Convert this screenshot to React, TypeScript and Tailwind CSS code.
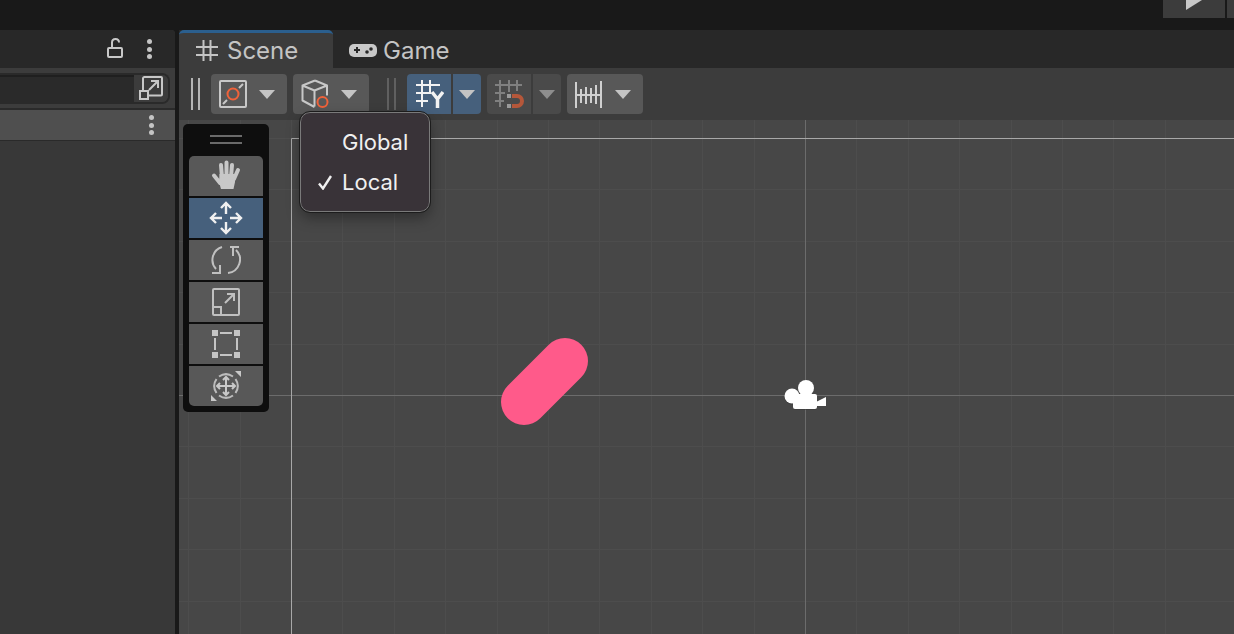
import React from 'react';

const Caret: React.FC<{ color?: string }> = ({ color = '#c4c4c4' }) => (
  <svg width="16" height="9" viewBox="0 0 16 9" className="shrink-0">
    <path d="M0 0h16L8 9z" fill={color} />
  </svg>
);

const Grip: React.FC<{ dim?: boolean }> = ({ dim }) => (
  <div className={`flex w-[9px] h-8 mt-1 justify-between shrink-0 ${dim ? 'opacity-30' : 'opacity-100'}`}>
    <div className="w-[2px] h-full bg-[#b4b4b4]" />
    <div className="w-[2px] h-full bg-[#b4b4b4]" />
  </div>
);

const ShadingIcon = () => (
  <svg width="28" height="28" viewBox="0 0 28 28" fill="none" className="shrink-0">
    <rect x="1" y="1" width="26" height="26" rx="1" stroke="#c8c8c8" strokeWidth="2" />
    <path d="M4 24l4-4M20 8l4-4" stroke="#c8c8c8" strokeWidth="2" />
    <circle cx="14" cy="14" r="5.500" stroke="#f0623a" strokeWidth="2" />
  </svg>
);

const CubeIcon = () => (
  <svg width="30" height="30" viewBox="0 0 30 30" fill="none" className="shrink-0">
    <path d="M15 1.500L27 6.500v10M15 1.500L2.500 6.500v15l12 6.500M2.500 6.500l12 5 12.500-5M14.500 11.500v16" stroke="#c8c8c8" strokeWidth="2" strokeLinejoin="round" />
    <circle cx="22.500" cy="23" r="5" fill="#585858" stroke="#f0623a" strokeWidth="2" />
  </svg>
);

const GridYIcon = () => (
  <svg width="30" height="30" viewBox="0 0 30 30" fill="none" className="shrink-0">
    <path d="M8 1v27M16 1v12M2 6h24M2 14h15M2 22h12" stroke="#f2f2f2" strokeWidth="2" />
    <path d="M18 13l5.500 7 5.500-7M23.500 20v9" stroke="#f2f2f2" strokeWidth="3.500" />
  </svg>
);

const GridSnapIcon = () => (
  <svg width="30" height="30" viewBox="0 0 30 30" fill="none" className="shrink-0">
    <path d="M6 1v27M15 1v12M23 1v11M1 6h27M1 14h10M1 22h9" stroke="#808080" strokeWidth="2" />
    <rect x="13" y="15" width="4" height="4" fill="#9a9a9a" />
    <rect x="13" y="25" width="4" height="4" fill="#9a9a9a" />
    <path d="M18 17h5a5 5 0 0 1 0 10h-5" stroke="#b5573a" strokeWidth="4" />
  </svg>
);

const IncrementIcon = () => (
  <svg width="28" height="28" viewBox="0 0 28 28" fill="none" className="shrink-0">
    <path d="M1 2v26M6 9v14M11 7v17M16 8v15M21 5v19M26 1v27M1 15h25" stroke="#d0d0d0" strokeWidth="2" />
  </svg>
);

const LockIcon = () => (
  <svg width="16" height="20" viewBox="0 0 16 20" fill="none" className="shrink-0 mb-[2px]">
    <rect x="1" y="10" width="14" height="9" rx="1" stroke="#c8c8c8" strokeWidth="2" />
    <path d="M5 10V4.500C5 2.500 6.500 1 8.500 1S12 2.500 12 4.500" stroke="#c8c8c8" strokeWidth="2" />
  </svg>
);

const Dots = () => (
  <div className="flex flex-col shrink-0 gap-[2.500px]">
    <div className="w-[5px] h-[5px] rounded-full bg-[#c4c4c4]" />
    <div className="w-[5px] h-[5px] rounded-full bg-[#c4c4c4]" />
    <div className="w-[5px] h-[5px] rounded-full bg-[#c4c4c4]" />
  </div>
);

const PickerIcon = () => (
  <svg width="24" height="24" viewBox="0 0 24 24" fill="none">
    <path d="M4 14V2.500A1.500 1.500 0 0 1 5.500 1H22a1 1 0 0 1 1 1v16.500a1 1 0 0 1-1 1H10" stroke="#c8c8c8" strokeWidth="2" />
    <rect x="1" y="15" width="8" height="8" fill="#3c3c3c" stroke="#c8c8c8" strokeWidth="2" />
    <path d="M10 14l9-9M12 5h7v7" stroke="#c8c8c8" strokeWidth="2" />
  </svg>
);

const HashIcon = () => (
  <svg width="22" height="21" viewBox="0 0 22 21" fill="none" className="shrink-0">
    <path d="M7.500 0v21M14.500 0v21M0 7h22M0 15h22" stroke="#c4c4c4" strokeWidth="2" />
  </svg>
);

const GamepadIcon = () => (
  <svg width="28" height="13" viewBox="0 0 28 13" className="shrink-0">
    <rect x="0" y="0" width="28" height="13" rx="5" fill="#c8c8c8" />
    <path d="M5 5h2V3h2v2h2v2H9v2H7V7H5z" fill="#282828" />
    <circle cx="18" cy="8" r="1.800" fill="#282828" />
    <circle cx="22" cy="5" r="1.800" fill="#282828" />
  </svg>
);

const HandIcon = () => (
  <svg width="30" height="30" viewBox="0 0 30 30" fill="#c8c8c8" className="mb-[2px]">
    <path d="M8.500 14H24v8l-1.500 7H10l-2-7z" />
    <path d="M15.500 2.500V16M10 5l1 12M21 5l-1 12M27 10l-4 9M3 15.500L9 23" fill="none" stroke="#c8c8c8" strokeWidth="4" strokeLinecap="round" />
  </svg>
);

const MoveIcon = () => (
  <svg width="34" height="34" viewBox="0 0 34 34" fill="none" stroke="#f0f0f0" strokeWidth="2.400">
    <path d="M17 2v11M17 21v11M2 17h11M21 17h11M12 7l5-5 5 5M12 27l5 5 5-5M7 12l-5 5 5 5M27 12l5 5-5 5" />
  </svg>
);

const RotateIcon = () => (
  <svg width="30" height="30" viewBox="0 0 30 30" fill="none" stroke="#c0c0c0" strokeWidth="2">
    <path d="M11 2A13.500 13.500 0 0 0 5 24M1 28h8v-8M17 28A13.500 13.500 0 0 0 25 5M19 2h9M22 2v9" />
  </svg>
);

const ScaleIcon = () => (
  <svg width="28" height="28" viewBox="0 0 28 28" fill="none" stroke="#c0c0c0" strokeWidth="2">
    <rect x="1" y="1" width="26" height="26" rx="1" />
    <path d="M1 19h8v8M13 15L22 6M15 6h7v7" />
  </svg>
);

const RectIcon = () => (
  <svg width="28" height="28" viewBox="0 0 28 28" fill="#c4c4c4">
    <rect x="0" y="0" width="6" height="6" />
    <rect x="22" y="0" width="6" height="6" />
    <rect x="0" y="22" width="6" height="6" />
    <rect x="22" y="22" width="6" height="6" />
    <path d="M8 2h12v2H8zM8 24h12v2H8zM2 8h2v12H2zM24 8h2v12h-2z" />
  </svg>
);

const TransformIcon = () => (
  <svg width="32" height="32" viewBox="0 0 32 32" fill="none">
    <path d="M9 6.500A12.500 12.500 0 0 1 23 6.500M25.500 9a12.500 12.500 0 0 1 0 14M23 25.500a12.500 12.500 0 0 1-14 0M6.500 23a12.500 12.500 0 0 1 0-14" stroke="#bcbcbc" strokeWidth="2" />
    <path d="M16 7v18M7 16h18M13 10l3-3 3 3M13 22l3 3 3-3M10 13l-3 3 3 3M22 13l3 3-3 3" stroke="#c8c8c8" strokeWidth="2" />
    <path d="M31 1v6l-6-6zM1 31v-6l6 6z" fill="#c8c8c8" />
  </svg>
);

const tools = [
  { key: 'hand', icon: <HandIcon />, active: false, extra: 'rounded-t-[5px]' },
  { key: 'move', icon: <MoveIcon />, active: true, extra: '' },
  { key: 'rotate', icon: <RotateIcon />, active: false, extra: '' },
  { key: 'scale', icon: <ScaleIcon />, active: false, extra: '' },
  { key: 'rect', icon: <RectIcon />, active: false, extra: '' },
  { key: 'transform', icon: <TransformIcon />, active: false, extra: 'rounded-b-[5px]' },
];

const gridXs = Array.from({ length: 21 }, (_, i) => Math.round(805 - 51.4 * 13 + 51.4 * i) + 0.5);
const gridYs = Array.from({ length: 11 }, (_, i) => Math.round(395 - 51.4 * 5 + 51.4 * i) + 0.5);

// scene canvas, drawn in page coordinates
const SceneCanvas = () => (
  <svg className="absolute inset-0" width="1055" height="514" viewBox="179 120 1055 514" fill="none">
    {gridXs.map(x => (
      <path key={x} d={`M${x} 120V634`} stroke="#4d4d4d" strokeWidth="1" />
    ))}
    {gridYs.map(y => (
      <path key={y} d={`M179 ${y}H1234`} stroke="#4d4d4d" strokeWidth="1" />
    ))}
    <path d="M179 395.500H1234M805.500 120V634" stroke="#6c6c6c" strokeWidth="1" />
    <path d="M291.500 634V138.500H1234" stroke="#a8a8a8" strokeWidth="1" />
    <path d="M524 402L565 361" stroke="#ff5a8a" strokeWidth="46" strokeLinecap="round" />
    <g fill="#3a3a3a" opacity="0.6" transform="translate(0 1)">
      <circle cx="792" cy="396" r="7.500" />
      <rect x="793" y="396" width="24" height="13" rx="2" />
    </g>
    <g fill="#ffffff">
      <circle cx="792" cy="396" r="7.500" />
      <circle cx="806" cy="388" r="8" />
      <rect x="793" y="394" width="24" height="15" rx="2" />
      <path d="M816 402l10-5v9h-10z" />
    </g>
  </svg>
);

export default function App() {
  return (
    <div className="w-[1234px] h-[634px] flex flex-col overflow-hidden bg-[#191919] font-['Inter',sans-serif]">
      {/* Top bar */}
      <div className="h-[30px] shrink-0 flex justify-end items-start">
        <div className="w-[62px] h-[18px] bg-[#3c3c3c] pl-[23px] flex items-start">
          <svg width="16" height="10" viewBox="0 0 16 10">
            <path d="M0 0h16L0 10z" fill="#c8c8c8" />
          </svg>
        </div>
        <div className="w-[7px] h-[18px] ml-[2px] bg-[#3c3c3c]" />
      </div>

      <div className="flex-1 flex gap-[4px] min-h-0">
        {/* Left panel */}
        <div className="w-[175px] shrink-0 flex flex-col bg-[#383838] rounded-tr-[4px] overflow-hidden">
          <div className="h-[38px] shrink-0 bg-[#282828] flex items-center justify-end pr-[23px] gap-[24px]">
            <LockIcon />
            <Dots />
          </div>
          <div className="h-[42px] shrink-0 bg-[#3c3c3c] border-b-2 border-[#2a2a2a] pr-[5px] flex items-center">
            <div className="flex-1 h-[31px] flex rounded-r-[8px] border-2 border-l-0 border-[#2a2a2a] overflow-hidden">
              <div className="flex-1 bg-[#2a2a2a] border-t-2 border-[#1f1f1f]" />
              <div className="w-[34px] bg-[#3c3c3c] flex items-center justify-center">
                <PickerIcon />
              </div>
            </div>
          </div>
          <div className="h-[31px] shrink-0 bg-[#4f4f4f] border-b border-[#2a2a2a] flex items-center justify-end pr-[21px]">
            <Dots />
          </div>
        </div>

        {/* Scene window */}
        <div className="flex-1 min-w-0 flex flex-col bg-[#282828]">
          <div className="h-[38px] shrink-0 flex items-stretch">
            <div className="w-[154px] bg-[#3c3c3c] rounded-t-[5px] border-t-[3px] border-[#2b5f8e] flex items-center pl-[17px] gap-[9px]">
              <HashIcon />
              <span className="text-[24px] leading-none text-[#c4c4c4]">Scene</span>
            </div>
            <div className="flex items-center pl-[16px] pt-[3px] gap-[6px]">
              <GamepadIcon />
              <span className="text-[24px] leading-none text-[#c4c4c4]">Game</span>
            </div>
          </div>

          <div className="h-[52px] shrink-0 bg-[#3c3c3c] flex items-start pt-[6px] pl-[12px]">
            <Grip />
            <button className="ml-[11px] w-[76px] h-10 rounded-[4px] bg-[#585858] flex items-center pl-2 gap-[12px]">
              <ShadingIcon />
              <Caret />
            </button>
            <button className="ml-[6px] w-[76px] h-10 rounded-[4px] bg-[#585858] flex items-center pl-[7px] gap-[11px]">
              <CubeIcon />
              <Caret />
            </button>
            <div className="ml-[18px]">
              <Grip dim />
            </div>
            <div className="ml-[11px] flex gap-[2px]">
              <button className="w-[44px] h-10 rounded-l-[4px] bg-[#46607c] flex items-center pl-[7px]">
                <GridYIcon />
              </button>
              <button className="w-[28px] h-10 rounded-r-[4px] bg-[#46607c] flex items-center justify-center">
                <Caret />
              </button>
            </div>
            <div className="ml-[6px] flex gap-[2px]">
              <button className="w-[44px] h-10 rounded-l-[4px] bg-[#4a4a4a] flex items-center pl-[7px]">
                <GridSnapIcon />
              </button>
              <button className="w-[28px] h-10 rounded-r-[4px] bg-[#4a4a4a] flex items-center justify-center">
                <Caret color="#8e8e8e" />
              </button>
            </div>
            <button className="ml-[6px] w-[76px] h-10 rounded-[4px] bg-[#585858] flex items-center pl-[8px] gap-[12px]">
              <IncrementIcon />
              <Caret />
            </button>
          </div>

          <div className="relative flex-1 min-h-0 bg-[#474747]">
            <SceneCanvas />

            {/* Tool overlay */}
            <div className="absolute left-[4px] top-[4px] w-[86px] h-[288px] bg-[#0e0e0e] rounded-[5px] px-[6px] flex flex-col">
              <div className="h-[32px] shrink-0 flex flex-col items-center justify-start pt-[11px] gap-[5px]">
                <div className="w-[32px] h-[2px] bg-[#6a6a6a]" />
                <div className="w-[32px] h-[2px] bg-[#6a6a6a]" />
              </div>
              <div className="flex flex-col gap-[2px]">
                {tools.map(t => (
                  <div
                    key={t.key}
                    className={`h-10 flex items-center justify-center ${t.active ? 'bg-[#46607c]' : 'bg-[#585858]'} ${t.extra}`}
                  >
                    {t.icon}
                  </div>
                ))}
              </div>
            </div>

            {/* Dropdown */}
            <div className="absolute left-[121px] top-[-8px] w-[130px] h-[100px] rounded-[10px] bg-[#393338] border border-[#7a7a7a] outline outline-1 outline-[#1c1c1c] shadow-[0_6px_14px_rgba(0,0,0,0.35)] flex flex-col pt-[9px] text-[22px] leading-[40px] text-[#f0f0f0]">
              <div className="pl-[41px]">Global</div>
              <div className="flex items-center pl-[17px] gap-[10px]">
                <svg width="14" height="15" viewBox="0 0 14 15" fill="none" className="shrink-0">
                  <path d="M1 8.500L5 13.500 13 1" stroke="#f0f0f0" strokeWidth="2.400" />
                </svg>
                <span>Local</span>
              </div>
            </div>
          </div>
        </div>
      </div>
    </div>
  );
}
